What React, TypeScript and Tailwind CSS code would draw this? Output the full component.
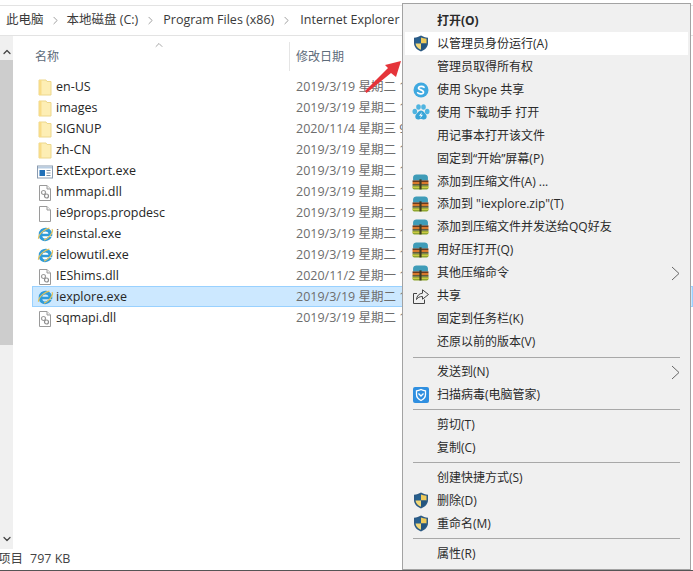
import { ChevronRight, ChevronUp, ChevronDown } from "lucide-react";
import type { ReactNode } from "react";

const uiFont = "font-['Open_Sans','Noto_Sans_CJK_SC',sans-serif]";

function FolderIcon() {
  return (
    <svg width="14" height="17" viewBox="0 0 14 17">
      <path d="M1 1h7l1 1.500h4V16H1z" fill="#fdeeb4" stroke="#ecd78c" strokeWidth="1" />
      <path d="M1 1h2.500v15H1z" fill="#f8dc88" />
    </svg>
  );
}

function ExeIcon() {
  return (
    <svg width="16" height="14" viewBox="0 0 16 14">
      <rect x="0.500" y="1" width="15" height="12" fill="#fff" stroke="#8a9bb0" />
      <rect x="1" y="1.500" width="14" height="2" fill="#b9cde2" />
      <rect x="2.500" y="5" width="5.500" height="6" fill="#1f6fb8" />
      <path d="M9.500 5.500h4M9.500 8h4M9.500 10.500h4" stroke="#7a8da3" strokeWidth="1" />
    </svg>
  );
}

function DllIcon() {
  return (
    <svg width="14" height="16" viewBox="0 0 14 16">
      <path d="M1.500 0.500h7.500l3.500 3.500v11.500h-11z" fill="#fff" stroke="#9a9a9a" />
      <path d="M9 0.500v3.500h3.500" fill="#eee" stroke="#9a9a9a" />
      <circle cx="5.500" cy="7.500" r="2" fill="none" stroke="#9c9c9c" strokeWidth="1.200" />
      <circle cx="8.500" cy="11" r="2" fill="none" stroke="#8f8f8f" strokeWidth="1.200" />
    </svg>
  );
}

function BlankIcon() {
  return (
    <svg width="14" height="16" viewBox="0 0 14 16">
      <path d="M1.500 0.500h7.500l3.500 3.500v11.500h-11z" fill="#fff" stroke="#9a9a9a" />
      <path d="M9 0.500v3.500h3.500" fill="#f4f4f4" stroke="#9a9a9a" />
    </svg>
  );
}

function IeIcon() {
  return (
    <svg width="17" height="17" viewBox="1 1 15 15">
      <path d="M2.500 8.500a6 6 0 1 1 11.800 1.500H5.700c.3 2.300 3.900 2.700 5 .8h3.200c-1.600 4.200-8 4.800-10.300 1.500-.7-1-1.100-2.400-1.100-3.800zm3.200-.6h5.400c-.3-2.700-5-2.700-5.400 0z" fill="#2f9bd8" />
      <ellipse cx="8.500" cy="8.500" rx="7.500" ry="3.600" transform="rotate(-40 8.500 8.500)" fill="none" stroke="#e5c45c" strokeWidth="1.100" strokeDasharray="13 6 14 20" />
    </svg>
  );
}

function UacShield() {
  return (
    <svg width="16" height="17" viewBox="0 0 16 17">
      <path d="M8 0.500c2 1.300 4.300 2 7 2.200v5.300c0 4-3 6.900-7 8.500-4-1.600-7-4.500-7-8.500V2.700c2.700-.2 5-.9 7-2.200z" fill="#2c5a84" />
      <path d="M8 2.500v6H2.500V3.800C4.700 3.600 6.500 3.200 8 2.500z" fill="#27608f" />
      <path d="M8 2.500c1.500.7 3.300 1.100 5.500 1.300v4.700H8z" fill="#f0cb5a" />
      <path d="M2.500 8.500H8v6.300c-3-1.300-5.200-3.500-5.500-6.300z" fill="#f2d878" />
      <path d="M8 8.500h5.500c-.3 2.800-2.500 5-5.500 6.300z" fill="#24557f" />
    </svg>
  );
}

function SkypeIcon() {
  return (
    <svg width="16" height="16" viewBox="0 0 16 16">
      <circle cx="8" cy="8" r="7.500" fill="#3fa9e0" />
      <path d="M11 5.300C10.200 4.300 6 3.800 5.500 5.900c-.4 2.200 5.200 1.800 5 4.300-.2 2.300-4.800 2-5.800.6" fill="none" stroke="#fff" strokeWidth="1.700" strokeLinecap="round" />
    </svg>
  );
}

function PawIcon() {
  return (
    <svg width="18" height="17" viewBox="0 0 18 17">
      <ellipse cx="2.800" cy="7.500" rx="2.300" ry="2.800" fill="#4fb4e0" />
      <ellipse cx="6.500" cy="3" rx="2.300" ry="2.800" fill="#4fb4e0" />
      <ellipse cx="11.500" cy="3" rx="2.300" ry="2.800" fill="#4fb4e0" />
      <ellipse cx="15.200" cy="7.500" rx="2.300" ry="2.800" fill="#4fb4e0" />
      <path d="M9 6.500c2.500 0 3.500 2.500 5 4 1.500 2 .5 5-2 5-1.200 0-2-.5-3-.5s-1.800.5-3 .5c-2.500 0-3.500-3-2-5 1.500-1.500 2.500-4 5-4z" fill="#38a5d8" />
      <path d="M10 8l-3 3.800h2l-1 2.700 3-3.800H9z" fill="#fff" />
    </svg>
  );
}

function ZipIcon() {
  return (
    <svg width="17" height="16" viewBox="0 0 16 15">
      <path d="M1 3.500C1 1.500 2.500.5 4 .5h8c1.500 0 3 1 3 3V6H1z" fill="#3f9cb8" />
      <rect x="0.500" y="6" width="15" height="1.500" fill="#6b3a1e" />
      <rect x="0.500" y="7.500" width="15" height="2" fill="#d9792c" />
      <rect x="0.500" y="9.500" width="15" height="1.500" fill="#4f4a26" />
      <path d="M0.500 11h15v2c0 1-.8 1.500-1.500 1.500H2C1.300 14.500.5 14 .5 13z" fill="#8fa62e" />
      <rect x="0.500" y="12" width="15" height="1" fill="#d8cf4a" />
      <rect x="7" y="5" width="2" height="9.500" fill="#3d3a22" />
    </svg>
  );
}

function ShareIcon() {
  return (
    <svg width="16" height="15" viewBox="0 0 16 15" fill="none" stroke="#444" strokeWidth="1">
      <path d="M4 4.500H.5v10h11v-4" />
      <path d="M9.500.8l6 4.700-6 4.700V7.500c-3 0-4.800 1-6 3 .3-3.600 2.500-6 6-6.300z" />
    </svg>
  );
}

function GuardIcon() {
  return (
    <svg width="16" height="16" viewBox="0 0 16 16">
      <rect width="16" height="16" rx="2" fill="#2f8fe0" />
      <path d="M8 2.500c1.500.8 3 1.200 4.500 1.300v3.700c0 2.700-1.800 4.700-4.500 6-2.700-1.300-4.500-3.300-4.500-6V3.800C5 3.700 6.500 3.300 8 2.500z" fill="none" stroke="#fff" strokeWidth="1.300" />
      <path d="M5.500 6.500L8 9l2.500-2.500" fill="none" stroke="#fff" strokeWidth="1.300" />
    </svg>
  );
}

function SubArrow() {
  return (
    <svg className="ml-auto mr-[8px]" width="9" height="15" viewBox="0 0 9 15" fill="none" stroke="#666" strokeWidth="1">
      <path d="M1 1l7 6.500L1 14" />
    </svg>
  );
}

const files: { name: string; date: string; icon: ReactNode; selected?: boolean }[] = [
  { name: "en-US", date: "2019/3/19 星期二 17:00", icon: <FolderIcon /> },
  { name: "images", date: "2019/3/19 星期二 17:00", icon: <FolderIcon /> },
  { name: "SIGNUP", date: "2020/11/4 星期三 9:12", icon: <FolderIcon /> },
  { name: "zh-CN", date: "2019/3/19 星期二 17:00", icon: <FolderIcon /> },
  { name: "ExtExport.exe", date: "2019/3/19 星期二 17:00", icon: <ExeIcon /> },
  { name: "hmmapi.dll", date: "2019/3/19 星期二 17:00", icon: <DllIcon /> },
  { name: "ie9props.propdesc", date: "2019/3/19 星期二 17:00", icon: <BlankIcon /> },
  { name: "ieinstal.exe", date: "2019/3/19 星期二 17:00", icon: <IeIcon /> },
  { name: "ielowutil.exe", date: "2019/3/19 星期二 17:00", icon: <IeIcon /> },
  { name: "IEShims.dll", date: "2020/11/2 星期一 17:00", icon: <DllIcon /> },
  { name: "iexplore.exe", date: "2019/3/19 星期二 17:00", icon: <IeIcon />, selected: true },
  { name: "sqmapi.dll", date: "2019/3/19 星期二 17:00", icon: <DllIcon /> },
];

type MenuEntry =
  | "sep"
  | { label: string; icon?: ReactNode; bold?: boolean; hover?: boolean; sub?: boolean };

const menu: MenuEntry[] = [
  { label: "打开(O)", bold: true },
  { label: "以管理员身份运行(A)", icon: <UacShield />, hover: true },
  { label: "管理员取得所有权" },
  { label: "使用 Skype 共享", icon: <SkypeIcon /> },
  { label: "使用 下载助手 打开", icon: <PawIcon /> },
  { label: "用记事本打开该文件" },
  { label: "固定到“开始”屏幕(P)" },
  { label: "添加到压缩文件(A) ...", icon: <ZipIcon /> },
  { label: "添加到 \"iexplore.zip\"(T)", icon: <ZipIcon /> },
  { label: "添加到压缩文件并发送给QQ好友", icon: <ZipIcon /> },
  { label: "用好压打开(Q)", icon: <ZipIcon /> },
  { label: "其他压缩命令", icon: <ZipIcon />, sub: true },
  { label: "共享", icon: <ShareIcon /> },
  { label: "固定到任务栏(K)" },
  { label: "还原以前的版本(V)" },
  "sep",
  { label: "发送到(N)", sub: true },
  { label: "扫描病毒(电脑管家)", icon: <GuardIcon /> },
  "sep",
  { label: "剪切(T)" },
  { label: "复制(C)" },
  "sep",
  { label: "创建快捷方式(S)" },
  { label: "删除(D)", icon: <UacShield /> },
  { label: "重命名(M)", icon: <UacShield /> },
  "sep",
  { label: "属性(R)" },
];

function ContextMenu() {
  return (
    <div className="absolute left-[402px] top-[3px] h-[567px] w-[289px] border border-[#a3a3a3] bg-[#f0f0f0] px-[2px] pt-[5.500px]">
      {menu.map((entry, i) =>
        entry === "sep" ? (
          <div key={i} className="flex h-[7px] items-center pl-[8px] pr-[8px]">
            <div className="h-px w-full bg-[#a8a8a8]" />
          </div>
        ) : (
          <div
            key={i}
            className={`flex h-[22.950px] items-center text-[12px] text-[#2a2a2a] ${entry.hover ? "bg-white" : ""} ${entry.bold ? "font-bold" : ""}`}
          >
            <span className="flex w-[32px] shrink-0 justify-center pr-[1px]">{entry.icon}</span>
            <span className="whitespace-pre">{entry.label}</span>
            {entry.sub && <SubArrow />}
          </div>
        ),
      )}
    </div>
  );
}

export default function App() {
  return (
    <div className={`relative flex h-[571px] w-[693px] flex-col overflow-hidden bg-white ${uiFont}`}>
      {/* address bar */}
      <div className="mt-[5px] flex h-[31px] shrink-0 items-center border-y border-[#e3e3e3] pl-[6px] text-[12.500px] text-[#3a3a3a]">
        <span>此电脑</span>
        <ChevronRight className="mx-[5px] h-[13px] w-[13px] text-[#8a8a8a]" strokeWidth={1.500} />
        <span>本地磁盘 (C:)</span>
        <ChevronRight className="mx-[6px] h-[13px] w-[13px] text-[#8a8a8a]" strokeWidth={1.500} />
        <span>Program Files (x86)</span>
        <ChevronRight className="ml-[6px] mr-[7px] h-[13px] w-[13px] text-[#8a8a8a]" strokeWidth={1.500} />
        <span>Internet Explorer</span>
      </div>

      <div className="flex min-h-0 flex-1">
        {/* scrollbar */}
        <div className="flex w-[13px] shrink-0 flex-col bg-[#f0f0f0]">
          <div className="flex h-[24px] items-center justify-center pt-[8px]">
            <ChevronUp className="h-[12px] w-[12px] text-[#444]" strokeWidth={2.500} />
          </div>
          <div className="h-[285px] bg-[#cdcdcd]" />
          <div className="flex-1" />
          <div className="flex h-[20px] items-center justify-center">
            <ChevronDown className="h-[12px] w-[12px] text-[#444]" strokeWidth={2.500} />
          </div>
        </div>

        <div className="flex min-w-0 flex-1 flex-col pl-[19px]">
          {/* column header */}
          <div className="relative flex h-[40px] shrink-0 items-center pt-[1px] text-[12px] text-[#5d6b7a]">
            <span className="w-[257px] pl-[3px]">名称</span>
            <span className="h-[29px] w-px bg-[#e5e5e5]" />
            <span className="pl-[6px]">修改日期</span>
            <ChevronUp className="absolute left-[121px] top-[3px] h-[12px] w-[12px] text-[#8a8a8a]" strokeWidth={1.500} />
          </div>

          {/* rows */}
          <div className="flex flex-col">
            {files.map((file) => (
              <div
                key={file.name}
                className={`flex h-[21px] items-center border pt-[2px] text-[12.500px] ${file.selected ? "border-[#99d1ff] bg-[#cce8ff]" : "border-transparent"}`}
              >
                <span className="flex w-[23px] shrink-0 justify-center pl-[1px]">{file.icon}</span>
                <span className="w-[240px] shrink-0 text-[#262626]">{file.name}</span>
                <span className="whitespace-nowrap text-[#6d6d6d]">{file.date}</span>
              </div>
            ))}
          </div>
        </div>
      </div>

      {/* status bar */}
      <div className="flex h-[22px] shrink-0 items-center gap-[7px] border-b border-[#555] text-[12.500px] text-[#444]">
        <span className="-ml-[2px]">项目</span>
        <span>797 KB</span>
      </div>

      <ContextMenu />

      {/* red pointer */}
      <svg className="absolute left-[362px] top-[58px]" width="42" height="38" viewBox="0 0 42 38">
        <path d="M39 3L34 19l-5-4L4.500 35 3 33 26 10l-3-3z" fill="#e5343a" />
      </svg>
    </div>
  );
}
